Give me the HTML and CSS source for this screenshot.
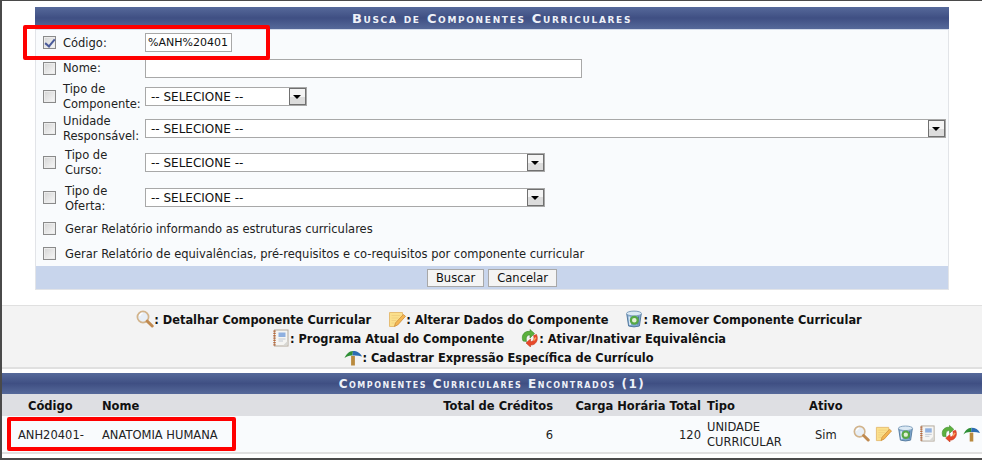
FILE: index.html
```html
<!DOCTYPE html>
<html lang="pt">
<head>
<meta charset="utf-8">
<title>Busca de Componentes Curriculares</title>
<link rel="stylesheet" href="styles.css">
</head>
<body>
<svg class="defs" width="0" height="0" aria-hidden="true">
  <symbol id="i-lupa" viewBox="0 0 18 18">
    <circle cx="7" cy="7" r="5.6" fill="#e8eff7" stroke="#d2b48c" stroke-width="1.7"/>
    <path d="M3.600 6.200a3.600 3.600 0 0 1 3-3" fill="none" stroke="#fff" stroke-width="1.300"/>
    <path d="M11.200 11.200l5 4.800" stroke="#c08a50" stroke-width="3" stroke-linecap="round"/>
  </symbol>
  <symbol id="i-nota" viewBox="0 0 18 18">
    <path d="M1.500 2.500h13v4.500l-6 7.500-1.500 2h-5.500z" fill="#fbe08c" stroke="#e6bd74"/>
    <path d="M3.500 5.500h9M3.500 8h7M3.500 10.500h5M3.500 13h3" stroke="#f1d07f"/>
    <path d="M15.300 4.500l2.200 1.800-7.800 8.700-3.200 1.300 1-3.400z" fill="#f5b652" stroke="#cb8e3a" stroke-width=".8"/>
  </symbol>
  <symbol id="i-lixo" viewBox="0 0 18 18">
    <path d="M1.800 4h14.400l-1.800 12q-5.400 1.800-10.800 0z" fill="#7ea8d0" stroke="#557a9e"/>
    <ellipse cx="9" cy="3.500" rx="7.500" ry="2.400" fill="#dbe9f4" stroke="#7f9fbd"/>
    <path d="M4.300 6.500l.9 8.500" stroke="#d9e8f5" stroke-width="1.800"/>
    <path d="M13.500 6.500l-.7 8" stroke="#4f7396" stroke-width="1.200"/>
    <circle cx="9.300" cy="10.200" r="3.400" fill="#e3f0d6" stroke="#56a844" stroke-width="2.200"/>
  </symbol>
  <symbol id="i-prog" viewBox="0 0 18 18">
    <rect x="2.500" y="1" width="13.500" height="16" fill="#f5f5f3" stroke="#b3a99b"/>
    <path d="M2.500 1.500v15" stroke="#b8693d" stroke-width="2.400" stroke-dasharray="1.300 1"/>
    <path d="M6.500 3.500h7v4.500h-7z" fill="#8fb0e0"/>
    <path d="M6.500 10h7M6.500 12h4.500" stroke="#c3cad3"/>
    <path d="M11 16.500l4.500-4.500v4.500z" fill="#d8d8d4"/>
  </symbol>
  <symbol id="i-ativar" viewBox="0 0 18 18">
    <path d="M2 12C-.5 6 4 1.500 9 2.500V.5l4.500 4-4.500 4.500V6C6 5.500 4.500 8.500 5.500 12.500z" fill="#5cb03e" stroke="#3c8a2a" stroke-width=".6"/>
    <path d="M15.500 5.500c2.500 5.500-1 11-6 10.500v2l-4.500-4 4.500-4v2.500c3 .3 4.300-2.500 3-6z" fill="#e8492a" stroke="#c43a1e" stroke-width=".6"/>
    <path d="M12.500 11.500l2.500-3" stroke="#f8a860" stroke-width="1.500"/>
  </symbol>
  <symbol id="i-expr" viewBox="0 0 18 18">
    <path d="M9 8v9.500" stroke="#b98a3e" stroke-width="3.800"/>
    <path d="M.5 10C2 6.500 5 3 9 3c-.2 1.700-.3 3-.5 4.500-3-.3-5.500.5-8 2.500z" fill="#2f8f36"/>
    <path d="M9 3c4 0 7.500 2 9 5.500-3-1-6.200-1.300-9.500-1 .2-1.500.3-2.800.5-4.500z" fill="#2c6cb2"/>
  </symbol>
</svg>

<main class="page">
  <form class="busca">
    <h2 class="titulo">Busca de Componentes Curriculares</h2>
    <div class="linha l25 rot-a">
      <input class="cb marcado" type="checkbox" checked>
      <label class="rot">Código:</label>
      <input class="texto cod" type="text" value="%ANH%20401">
    </div>
    <div class="linha l26 rot-a">
      <input class="cb" type="checkbox">
      <label class="rot">Nome:</label>
      <input class="texto nome" type="text">
    </div>
    <div class="linha l31 rot-a">
      <input class="cb" type="checkbox">
      <label class="rot">Tipo de<br>Componente:</label>
      <span class="sel s-tipo">-- SELECIONE --<i class="seta"></i></span>
    </div>
    <div class="linha l33 rot-a">
      <input class="cb" type="checkbox">
      <label class="rot">Unidade<br>Responsável:</label>
      <span class="sel s-unid">-- SELECIONE --<i class="seta"></i></span>
    </div>
    <div class="linha l34 rot-b">
      <input class="cb" type="checkbox">
      <label class="rot">Tipo de<br>Curso:</label>
      <span class="sel s-curso">-- SELECIONE --<i class="seta"></i></span>
    </div>
    <div class="linha l36 rot-b">
      <input class="cb" type="checkbox">
      <label class="rot">Tipo de<br>Oferta:</label>
      <span class="sel s-curso">-- SELECIONE --<i class="seta"></i></span>
    </div>
    <div class="linha l26 rot-b">
      <input class="cb" type="checkbox">
      <label class="rot longo">Gerar Relatório informando as estruturas curriculares</label>
    </div>
    <div class="linha l25 rot-b">
      <input class="cb" type="checkbox">
      <label class="rot longo">Gerar Relatório de equivalências, pré-requisitos e co-requisitos por componente curricular</label>
    </div>
    <div class="rodape">
      <button class="btn" type="button">Buscar</button>
      <button class="btn" type="button">Cancelar</button>
    </div>
  </form>

  <section class="legenda">
    <p class="leg-linha">
      <span class="leg"><svg class="ico"><use href="#i-lupa"/></svg>: Detalhar Componente Curricular</span>
      <span class="leg"><svg class="ico"><use href="#i-nota"/></svg>: Alterar Dados do Componente</span>
      <span class="leg"><svg class="ico"><use href="#i-lixo"/></svg>: Remover Componente Curricular</span>
    </p>
    <p class="leg-linha">
      <span class="leg"><svg class="ico"><use href="#i-prog"/></svg>: Programa Atual do Componente</span>
      <span class="leg"><svg class="ico"><use href="#i-ativar"/></svg>: Ativar/Inativar Equivalência</span>
    </p>
    <p class="leg-linha">
      <span class="leg"><svg class="ico"><use href="#i-expr"/></svg>: Cadastrar Expressão Específica de Currículo</span>
    </p>
  </section>

  <section class="result">
    <h2 class="titulo">Componentes Curriculares Encontrados (1)</h2>
    <div class="grade cab">
      <span class="c-cod cen">Código</span>
      <span class="c-nome">Nome</span>
      <span class="c-cred dir">Total de Créditos</span>
      <span class="c-carga dir">Carga Horária Total</span>
      <span class="c-tipo">Tipo</span>
      <span class="c-ativo">Ativo</span>
    </div>
    <div class="grade item">
      <span class="c-cod">ANH20401-</span>
      <span class="c-nome">ANATOMIA HUMANA</span>
      <span class="c-cred dir">6</span>
      <span class="c-carga dir">120</span>
      <span class="c-tipo">UNIDADE CURRICULAR</span>
      <span class="c-ativo sim">Sim</span>
      <span class="acoes">
        <svg class="ico"><use href="#i-lupa"/></svg>
        <svg class="ico"><use href="#i-nota"/></svg>
        <svg class="ico"><use href="#i-lixo"/></svg>
        <svg class="ico"><use href="#i-prog"/></svg>
        <svg class="ico"><use href="#i-ativar"/></svg>
        <svg class="ico"><use href="#i-expr"/></svg>
      </span>
    </div>
  </section>

  <div class="marca m1"></div>
  <div class="marca m2"></div>
</main>
</body>
</html>
```
FILE: styles.css
```css
* { box-sizing: border-box; }
html, body { margin: 0; padding: 0; height: 100%; overflow: hidden; background: #4a4a4a; }
body { font: 11.5px/15px "DejaVu Sans", Verdana, sans-serif; color: #222; padding: 1px 0 0 2px; }
.defs { position: absolute; }
.page {
  position: relative; background: #fff; height: 457px; padding-top: 6px;
  display: flex; flex-direction: column; overflow: hidden;
}
.titulo {
  margin: 0; height: 21px; line-height: 23px; text-align: center;
  font-size: 12px; font-weight: bold; font-variant: small-caps; letter-spacing: 1.5px; color: #eef1f8;
  background: linear-gradient(#56699a, #3f4f83 50%, #56699a);
}
.busca {
  margin: 0 33px; width: 914px; background: #f9fbfd; flex: none;
  border: solid #e2e4e8; border-width: 0 1px 1px; height: 283px;
}
.busca .titulo {
  margin: 0 -1px; height: 23px; line-height: 24px; font-size: 13px; letter-spacing: 1.67px;
  border-bottom: 1px solid #d5dcea;
}
.linha { display: flex; align-items: center; padding-left: 7px; }
.l25 { height: 25px; } .l26 { height: 26px; } .l31 { height: 31px; }
.l33 { height: 33px; } .l34 { height: 34px; } .l36 { height: 36px; }
.cb {
  appearance: none; width: 13px; height: 13px; margin: 0; flex: none;
  border: 1px solid #8a8a8a; background: linear-gradient(135deg, #d4d4d4, #f8f8f8);
  box-shadow: inset 0 0 0 1px #ececec; position: relative;
}
.marcado::after {
  content: ""; position: absolute; left: 3px; top: 0; width: 4px; height: 8px;
  border: solid #4a5a9a; border-width: 0 2px 2px 0; transform: rotate(40deg);
}
.rot { flex: none; }
.rot-a .rot { margin-left: 7px; width: 82px; }
.rot-b .rot { margin-left: 9px; width: 80px; padding-top: 2px; }
.l25 .rot { padding-top: 2px; }
.l36 .rot { padding-top: 4px; }
.rot.longo { width: auto; }
.texto, .sel {
  height: 19px; border: 1px solid #a8a8a8; background: #fff; margin: 0; color: #111;
  font-family: "DejaVu Sans", Verdana, sans-serif;
}
.texto { padding: 0 2px; border-radius: 0; outline: 0; font-size: 11px; line-height: 17px; }
.cod { width: 87px; }
.nome { width: 437px; }
.sel {
  display: flex; justify-content: space-between; align-items: center; padding: 2px 0 0 5px;
  font-size: 12px; line-height: 17px;
}
.s-tipo { width: 162px; }
.s-unid { width: 801px; }
.s-curso { width: 400px; }
.seta {
  width: 17px; height: 17px; flex: none; margin-top: -2px; border: 1px solid #707070; position: relative;
  background: linear-gradient(#f4f4f4 50%, #dcdcdc 50%);
}
.seta::after {
  content: ""; position: absolute; left: 3px; top: 6px;
  border: 4px solid transparent; border-top: 4px solid #000; border-bottom: 0;
}
.rodape {
  height: 23px; background: #c8d5ec; display: flex; justify-content: center; align-items: center; gap: 4px; padding-top: 1px;
}
.btn {
  height: 18px; padding: 0 8px; border: 1px solid #a8a8a8; background: #f4f4f4; color: #111;
  font: 11.5px/14px "DejaVu Sans", Verdana, sans-serif; border-radius: 0;
}
.legenda {
  margin-top: 15px; height: 64px; background: #f3f3f3; flex: none;
  border: solid #e0e0e0; border-width: 1px 0 2px; padding: 5px 0 0 14px;
  font-size: 11.4px; font-weight: bold; color: #111;
}
.leg-linha {
  margin: 0; height: 19px; display: flex; justify-content: center; align-items: center; gap: 17px;
}
.leg { display: inline-flex; align-items: center; white-space: nowrap; }
.leg .ico { margin-top: -3px; }
.ico { width: 18px; height: 18px; flex: none; }
.result { margin-top: 4px; flex: none; border-bottom: 2px solid #e0e0e0; }
.grade {
  display: grid; align-items: center;
  grid-template-columns: 16px 84px 340px 111px 20px 128px 6px 102px 44px auto;
}
.grade > * { white-space: nowrap; grid-row: 1; }
.cab { height: 22px; padding-top: 3px; background: #dedfe3; font-weight: bold; color: #111; }
.item { height: 36px; padding-top: 2px; background: #f9fbfd; }
.c-cod { grid-column: 2; }
.cen { padding-left: 10px; }
.c-nome { grid-column: 3; }
.c-cred { grid-column: 3 / 5; }
.c-carga { grid-column: 5 / 7; }
.c-tipo { grid-column: 8; }
.grade > .c-tipo { white-space: normal; width: 90px; }
.c-ativo { grid-column: 9; }
.sim { padding-left: 6px; }
.dir { text-align: right; }
.acoes { grid-column: 10; display: flex; gap: 5px; margin-top: -3px; }
.acoes .ico { width: 17px; height: 17px; }
.marca { position: absolute; border: 4px solid #f00; border-radius: 2px; pointer-events: none; }
.m1 { left: 21px; top: 24px; width: 247px; height: 35px; }
.m2 { left: 5px; top: 416px; width: 229px; height: 34px; }
```
